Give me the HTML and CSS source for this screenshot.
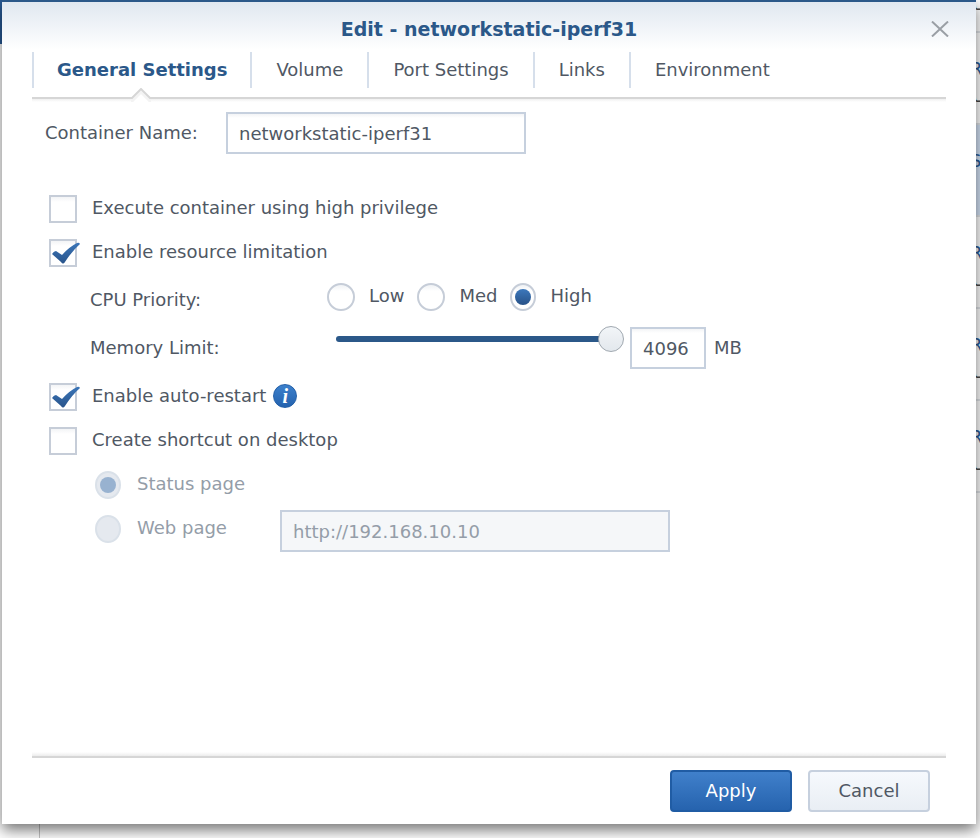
FILE: index.html
```html
<!DOCTYPE html>
<html lang="en">
<head>
<meta charset="utf-8">
<meta name="viewport" content="width=device-width, initial-scale=1">
<title>Edit - networkstatic-iperf31</title>
<link rel="stylesheet" href="styles.css">
</head>
<body>
<div class="backdrop" aria-hidden="true">
  <div class="backdrop-bar"></div>
  <div class="backdrop-panel"></div>
  <div class="backdrop-list">
    <div class="peek"><span></span><span class="peek-note">U</span></div>
    <div class="peek"><span>R</span><span class="peek-note">U</span></div>
    <div class="peek peek-selected"><span>S</span></div>
    <div class="peek"><span>R</span><span class="peek-note">U</span></div>
    <div class="peek"><span>R</span><span class="peek-note">U</span></div>
    <div class="peek"><span>R</span><span class="peek-note">U</span></div>
  </div>
</div>

<form class="dialog" role="dialog" aria-labelledby="dialog-title">
  <header class="dialog-header">
    <h1 id="dialog-title">Edit - networkstatic-iperf31</h1>
    <button class="close" type="button" aria-label="Close">
      <svg viewBox="0 0 18 16" width="18" height="16"><path d="M1 0.5 L17 15.5 M17 0.5 L1 15.5" fill="none" stroke="#9a9fa5" stroke-width="2"/></svg>
    </button>
  </header>

  <nav class="tabs">
    <a class="tab tab-active" href="#general">General Settings
      <svg class="notch" viewBox="0 0 20 14" width="20" height="14"><path d="M0 9 L10 0 L20 9 V14 H0 Z" fill="#fff"/><path d="M0 12.5 L1.5 12.5 L10 4 L18.5 12.5 L20 12.5" fill="none" stroke="#f3f3f3" stroke-width="3"/><path d="M0 10 L1 10 L10 1 L19 10 L20 10" fill="none" stroke="#d6d6d6" stroke-width="2"/></svg>
    </a>
    <a class="tab" href="#volume">Volume</a>
    <a class="tab" href="#ports">Port Settings</a>
    <a class="tab" href="#links">Links</a>
    <a class="tab" href="#environment">Environment</a>
  </nav>

  <main class="content">
    <div class="name-row">
      <label for="name">Container Name:</label>
      <input class="text name-input" id="name" type="text" value="networkstatic-iperf31">
    </div>

    <div class="row">
      <input class="check" id="privilege" type="checkbox">
      <label for="privilege">Execute container using high privilege</label>
    </div>
    <div class="row">
      <input class="check" id="limit" type="checkbox" checked>
      <label for="limit">Enable resource limitation</label>
    </div>

    <div class="limits">
      <div class="limit-row">
        <span class="limit-label" id="cpu-label">CPU Priority:</span>
        <div class="choices" role="radiogroup" aria-labelledby="cpu-label">
          <label class="choice"><input class="radio" type="radio" name="cpu">Low</label>
          <label class="choice"><input class="radio" type="radio" name="cpu">Med</label>
          <label class="choice"><input class="radio" type="radio" name="cpu" checked>High</label>
        </div>
      </div>
      <div class="limit-row">
        <label class="limit-label" for="memory">Memory Limit:</label>
        <input class="slider" type="range" min="0" max="4096" value="4096" aria-label="Memory limit slider">
        <input class="text memory-input" id="memory" type="text" value="4096">
        <span>MB</span>
      </div>
    </div>

    <div class="row">
      <input class="check" id="restart" type="checkbox" checked>
      <label for="restart">Enable auto-restart</label>
      <button class="info" type="button" aria-label="Information">i</button>
    </div>
    <div class="row">
      <input class="check" id="shortcut" type="checkbox">
      <label for="shortcut">Create shortcut on desktop</label>
    </div>

    <div class="row row-sub">
      <input class="radio" id="status-page" type="radio" name="page" checked disabled>
      <label for="status-page">Status page</label>
    </div>
    <div class="row row-sub">
      <input class="radio" id="web-page" type="radio" name="page" disabled>
      <label class="web-label" for="web-page">Web page</label>
      <input class="text url-input" type="text" value="http://192.168.10.10" aria-label="Web page address" disabled>
    </div>
  </main>

  <footer class="dialog-footer">
    <button class="button button-primary" type="submit">Apply</button>
    <button class="button" type="button">Cancel</button>
  </footer>
</form>
</body>
</html>
```
FILE: styles.css
```css
* {
  box-sizing: border-box;
}

body {
  margin: 0;
  background: #fff;
  color: #505864;
  font: 18px/24px Verdana, "DejaVu Sans", sans-serif;
}

input,
button {
  margin: 0;
  font: inherit;
  color: inherit;
}

/* Window behind the dialog */
.backdrop {
  position: absolute;
  inset: 0;
  z-index: -1;
  overflow: hidden;
}

.backdrop-bar {
  position: absolute;
  left: 0;
  top: 0;
  width: 30px;
  height: 44px;
  background: #285a96;
}

.backdrop-panel {
  position: absolute;
  inset: 0 0 0 39px;
  border-left: 1px solid #c4c4c4;
}

.backdrop-list {
  position: absolute;
  top: -59px;
  right: 0;
  width: 12px;
}

.peek {
  display: flex;
  flex-direction: column;
  height: 92px;
  padding: 24px 0 0 2px;
  border-bottom: 2px solid #e0e4e8;
  color: #285a96;
}

.peek span {
  height: 27px;
}

.peek .peek-note {
  padding-left: 2px;
  color: #444;
}

.peek-selected {
  background: #d3e2f5;
}

/* Dialog */
.dialog {
  display: flex;
  flex-direction: column;
  min-height: calc(100vh - 14px);
  margin: 0 4px 14px 2px;
  padding: 0 30px;
  border-top: 2px solid #2b5889;
  background: linear-gradient(#e0e7f0, #fff 48px) #fff;
  box-shadow: 0 6px 14px rgba(0, 0, 0, 0.55);
}

.dialog-header {
  display: flex;
  align-items: center;
  height: 50px;
  padding-top: 3px;
}

.dialog-header h1 {
  flex: 1;
  margin: 0 -20px 0 0;
  color: #2b5889;
  font-size: 19px;
  line-height: 24px;
  text-align: center;
}

.close {
  display: flex;
  margin-right: -8px;
  padding: 5px;
  border: 0;
  background: none;
  cursor: pointer;
}

.tabs {
  display: flex;
  height: 50px;
  background: linear-gradient(#d6d6d6 0 2px, #f0f0f0 2px, #fff) bottom / 100% 5px no-repeat;
}

.tab {
  position: relative;
  height: 36px;
  padding: 0 24px;
  border-left: 2px solid #d6dfeb;
  color: inherit;
  line-height: 36px;
  text-decoration: none;
}

.tab-active {
  padding: 0 23px;
  color: #2b5889;
  font-weight: bold;
}

.notch {
  position: absolute;
  bottom: -14px;
  left: calc(50% - 11px);
}

.content {
  flex: 1;
  padding: 10px 13px 0;
}

.name-row {
  display: flex;
  align-items: center;
  margin-bottom: 32px;
}

.name-row label {
  width: 181px;
}

.text {
  height: 42px;
  padding: 0 11px;
  border: 2px solid #c6d0de;
  background: linear-gradient(#f3f4f6, #fff 4px);
}

.name-input {
  width: 300px;
}

.row {
  display: flex;
  align-items: center;
  height: 44px;
  padding-left: 4px;
}

.row > label {
  margin-left: 15px;
}

.check,
.radio {
  position: relative;
  flex: none;
  width: 28px;
  height: 28px;
  margin-top: 2px;
  border: 2px solid #c6cdd8;
  appearance: none;
}

.check {
  background: linear-gradient(#f3f4f6, #fff 5px);
}

.check:checked::after {
  position: absolute;
  top: 0;
  left: 0;
  width: 30px;
  height: 24px;
  background: linear-gradient(#3c78bc, #285288);
  clip-path: path("M1 13 Q3 10 5 10 L11 14 Q18 6 26 2 Q28 1 29 3 Q21 10 14 21 Q12 24 10 21 Z");
  content: "";
}

.limits {
  padding: 2px 0 2px 45px;
}

.limit-row {
  display: flex;
  align-items: center;
  height: 48px;
}

.limit-label {
  width: 237px;
}

.choices {
  display: flex;
  align-self: flex-start;
  gap: 13px;
  height: 40px;
}

.choice {
  display: flex;
  align-items: center;
  gap: 14px;
}

.radio {
  border-radius: 50%;
  background: linear-gradient(#f0f2f5, #fff 6px);
}

.radio:checked,
.radio:disabled {
  width: 26px;
}

.radio:checked::after {
  position: absolute;
  inset: 4px;
  border-radius: 50%;
  background: linear-gradient(#3c78bc, #285288);
  content: "";
}

.radio:disabled {
  border-color: #dae1e9;
  background: #e5e9ef;
}

.radio:disabled::after {
  background: #98b2d0;
}

.slider {
  align-self: flex-start;
  width: 288px;
  height: 30px;
  margin: 0 6px 0 9px;
  background: none;
  appearance: none;
}

.slider::-webkit-slider-runnable-track {
  height: 6px;
  border-radius: 3px;
  background: linear-gradient(to right, #2b5889 95%, transparent 95%);
}

.slider::-webkit-slider-thumb {
  width: 26px;
  height: 26px;
  margin-top: -10px;
  border: 1px solid #a0a8b0;
  border-radius: 50%;
  background: linear-gradient(#f2f5f8, #e3e8ed);
  appearance: none;
}

.memory-input {
  width: 76px;
  margin-right: 8px;
}

.info {
  width: 24px;
  height: 24px;
  margin-left: 7px;
  padding: 0;
  border: 1px solid #2460a8;
  border-radius: 50%;
  background: linear-gradient(#3c80cc, #2462ae);
  color: #fff;
  font: italic bold 20px/20px "Liberation Serif", serif;
  text-align: center;
}

.radio:checked::after {
  inset: 4px 3px;
}

.row-sub {
  padding-left: 50px;
  color: #949da8;
}

.row-sub > label {
  margin-left: 16px;
}

.row-sub > .web-label {
  width: 143px;
}

.url-input {
  flex: 0 1 390px;
  min-width: 0;
  margin-top: 6px;
}

.url-input:disabled {
  background: #f5f7f9;
  color: #949da8;
}

.dialog-footer {
  display: flex;
  justify-content: flex-end;
  gap: 16px;
  padding: 18px 16px 12px;
  background: linear-gradient(#fff, #ececec 4px, #d6d6d6 4px 6px, transparent 6px) no-repeat;
}

.button {
  width: 122px;
  height: 42px;
  border: 2px solid #c6d0de;
  border-radius: 4px;
  background: linear-gradient(#f6f9fd, #e9eef4);
}

.button-primary {
  border-color: #205ca4;
  background: linear-gradient(#4080cb, #2663ae);
  color: #fff;
}
```
